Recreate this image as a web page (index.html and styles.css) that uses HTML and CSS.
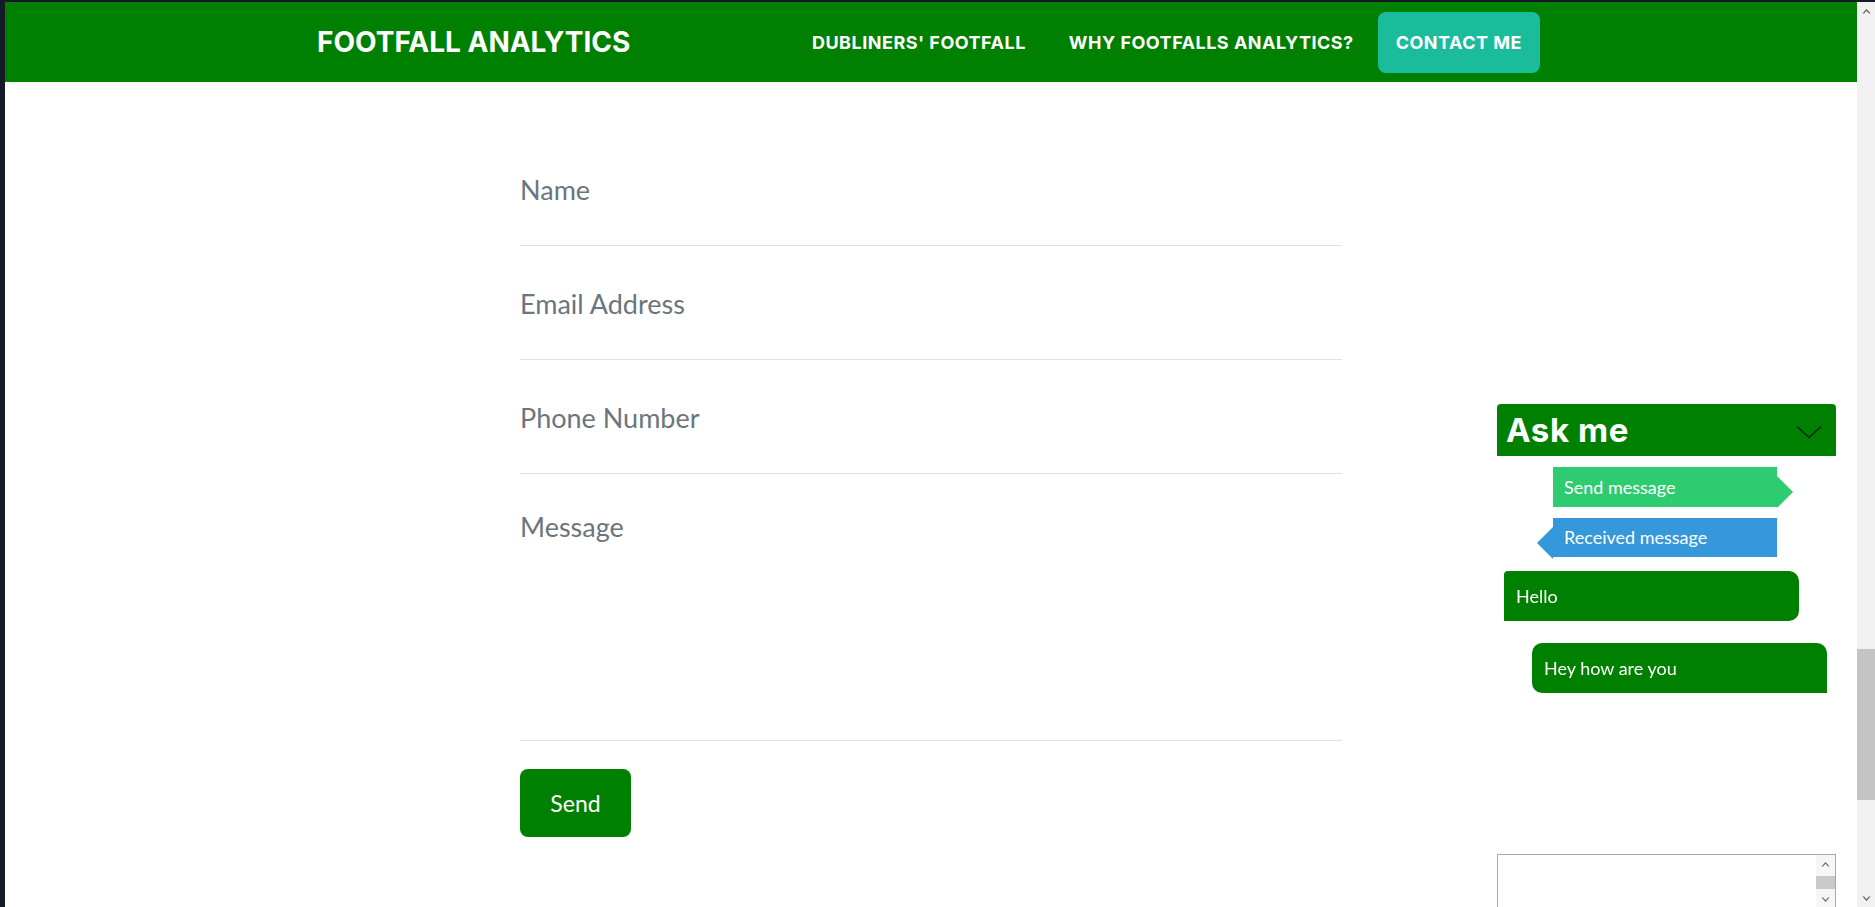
FILE: index.html
```html
<!DOCTYPE html>
<html lang="en">
<head>
<meta charset="utf-8">
<title>Footfall Analytics – Contact</title>
<link rel="stylesheet" href="styles.css">
</head>
<body>
<div class="page">
  <header class="topbar">
    <div class="topbar-inner">
      <a class="brand" href="#">FOOTFALL ANALYTICS</a>
      <nav class="menu">
        <a class="menu-link" href="#">DUBLINERS' FOOTFALL</a>
        <a class="menu-link" href="#">WHY FOOTFALLS ANALYTICS?</a>
        <a class="menu-link active" href="#">CONTACT ME</a>
      </nav>
    </div>
  </header>
  <main class="content">
    <form class="contact-form">
      <div class="field"><span class="field-label">Name</span></div>
      <div class="field"><span class="field-label">Email Address</span></div>
      <div class="field"><span class="field-label">Phone Number</span></div>
      <div class="field field-message"><span class="field-label">Message</span></div>
      <button class="send-btn" type="button">Send</button>
    </form>
  </main>
</div>
<div class="vscroll">
  <div class="vscroll-btn"><svg width="9" height="6" viewBox="0 0 9 6"><path d="M0.5 5.5 L4.5 1 L8.5 5.5 L7 5.5 L4.5 2.8 L2 5.5 Z" fill="#5a5a5a"/></svg></div>
  <div class="vscroll-track"><div class="vscroll-thumb"></div></div>
  <div class="vscroll-btn"><svg width="9" height="6" viewBox="0 0 9 6"><path d="M0.5 0.5 L4.5 5 L8.5 0.5 L7 0.5 L4.5 3.2 L2 0.5 Z" fill="#5a5a5a"/></svg></div>
</div>
<aside class="chat">
  <div class="chat-head">
    <span class="chat-title">Ask me</span>
    <svg class="chat-chevron" width="26" height="14" viewBox="0 0 26 14"><polyline points="1,1.5 13,12.5 25,1.5" fill="none" stroke="#062806" stroke-width="1.6"/></svg>
  </div>
  <div class="chat-body">
    <div class="legend legend-send">Send message</div>
    <div class="legend legend-recv">Received message</div>
    <div class="msg msg-in">Hello</div>
    <div class="msg msg-out">Hey how are you</div>
  </div>
  <div class="chat-input">
    <div class="chat-input-area"></div>
    <div class="mini-scroll">
      <svg width="9" height="6" viewBox="0 0 9 6"><path d="M0.5 5.5 L4.5 1 L8.5 5.5 L7 5.5 L4.5 2.8 L2 5.5 Z" fill="#6a6a6a"/></svg>
      <div class="mini-thumb"></div>
      <svg width="9" height="6" viewBox="0 0 9 6"><path d="M0.5 0.5 L4.5 5 L8.5 0.5 L7 0.5 L4.5 3.2 L2 0.5 Z" fill="#6a6a6a"/></svg>
    </div>
  </div>
</aside>
</body>
</html>
```
FILE: styles.css
```css
* { box-sizing: border-box; }
html, body { margin: 0; }
body {
  display: flex;
  height: 907px;
  overflow: hidden;
  border-top: 2px solid #141b26;
  border-left: 5px solid #141b26;
  background: #fff;
  font-family: "Lato", "Liberation Sans", sans-serif;
}
.page { flex: 1; min-width: 0; display: flex; flex-direction: column; }

/* header */
.topbar { flex: none; height: 80px; background: #008000; }
.topbar-inner {
  width: 1228px; height: 100%; margin: 0 auto;
  display: flex; align-items: center; justify-content: space-between;
}
.brand {
  font-family: "Inter", "Liberation Sans", sans-serif;
  font-weight: 700; font-size: 28px; letter-spacing: 0;
  color: #fff; text-decoration: none;
}
.menu { display: flex; align-items: center; gap: 5px; margin-right: 5px; }
.menu-link {
  font-family: "Inter", "Liberation Sans", sans-serif;
  font-weight: 700; font-size: 18px; letter-spacing: 0.5px;
  color: #fff; text-decoration: none;
  height: 61px; line-height: 61px; padding: 0 19px; border-radius: 8px;
}
.menu-link.active { background: #1abc9c; padding: 0 18px; }

/* form */
.content { flex: 1; padding-top: 50px; }
.contact-form { width: 822px; margin: 0 auto; }
.field { height: 114px; padding-top: 40px; border-bottom: 1px solid #dde1e8; }
.field-message { height: 267px; padding-top: 35px; }
.field-label { display: block; font-size: 27px; line-height: 36px; color: #6c757d; }
.send-btn {
  margin-top: 28px; width: 111px; height: 68px;
  border: none; border-radius: 8px; background: #008000;
  color: #fff; font-family: "Lato", sans-serif; font-size: 23px; padding: 0;
}

/* page scrollbar */
.vscroll { flex: none; width: 18px; display: flex; flex-direction: column; background: #f1f1f1; }
.vscroll-btn { height: 17px; display: flex; align-items: center; justify-content: center; }
.vscroll-track { flex: 1; padding-top: 630px; }
.vscroll-thumb { width: 100%; height: 151px; background: #c4c4c4; }

/* chat widget (floating) */
.chat {
  position: fixed; left: 1497px; top: 404px; bottom: 0; width: 339px;
  display: flex; flex-direction: column;
}
.chat-head {
  height: 52px; background: #008000; border-radius: 4px 4px 0 0;
  display: flex; align-items: center; justify-content: space-between;
  padding: 0 14px 0 9px;
}
.chat-title {
  font-family: "Inter", "Liberation Sans", sans-serif;
  font-weight: 700; font-size: 33px; letter-spacing: 0.6px; color: #fff;
}
.chat-chevron { margin-top: 3px; }
.chat-body { padding-top: 11px; display: flex; flex-direction: column; align-items: flex-start; }
.legend {
  position: relative; width: 224px; margin-left: 56px;
  padding-left: 11px; color: #fff; font-size: 18px;
}
.legend-send { height: 40px; line-height: 40px; background: #2ecc71; }
.legend-send::after {
  content: ""; position: absolute; top: 9px; right: -16px;
  border-top: 16px solid transparent; border-bottom: 16px solid transparent;
  border-left: 16px solid #2ecc71;
}
.legend-recv { margin-top: 11px; height: 39px; line-height: 39px; background: #3498db; }
.legend-recv::before {
  content: ""; position: absolute; top: 9px; left: -16px;
  border-top: 16px solid transparent; border-bottom: 16px solid transparent;
  border-right: 16px solid #3498db;
}
.msg {
  width: 295px; height: 50px; line-height: 50px; padding-left: 12px;
  background: #008000; color: #fff; font-size: 18px;
}
.msg-in { margin-top: 14px; margin-left: 7px; border-radius: 4px 10px 10px 0; }
.msg-out { margin-top: 22px; margin-left: 35px; border-radius: 10px 10px 0 10px; }
.chat-input {
  margin-top: auto; height: 53px; display: flex;
  border: 1px solid #a9a9a9; border-bottom: none; background: #fff;
}
.chat-input-area { flex: 1; }
.mini-scroll {
  width: 19px; display: flex; flex-direction: column; align-items: center;
  justify-content: space-between; padding: 6px 0 4px; background: #f6f6f6;
}
.mini-thumb { width: 100%; height: 13px; background: #c9c9c9; }
```
